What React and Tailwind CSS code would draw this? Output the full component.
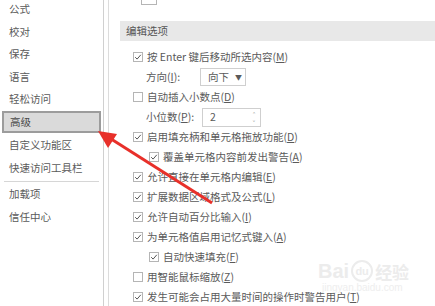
import React from "react";

const font = { fontFamily: '"Noto Sans CJK SC", "Noto Sans", sans-serif' };

function Check({ checked }) {
  return (
    <span className="w-[10px] h-[10px] border border-[#b5b5b5] bg-white flex items-center justify-center shrink-0">
      {checked && (
        <svg width="8" height="8" viewBox="0 0 8 8">
          <path d="M1.2 4.2 L3.1 6.1 L6.8 1.8" stroke="#555" strokeWidth="1" fill="none" />
        </svg>
      )}
    </span>
  );
}

function Row({ checked, indent, children }) {
  return (
    <div className={`h-[20px] flex items-center gap-[4px] ${indent ? "pl-[29px]" : "pl-[13px]"}`}>
      <Check checked={checked} />
      <span>{children}</span>
    </div>
  );
}

const side = ["公式", "校对", "保存", "语言", "轻松访问"];

export default function App() {
  return (
    <div style={font} className="relative w-[435px] h-[306px] bg-white overflow-hidden text-[10.5px] text-[#5a5a5a] leading-none">
      <div className="flex h-full">
        <div className="w-[104px] shrink-0 border-r border-[#d0d0d0] flex flex-col">
          <div className="-mt-[2px]" />
          {side.map((s) => (
            <div key={s} className="h-[22.6px] flex items-center pl-[9px]">{s}</div>
          ))}
          <div className="h-[22px] mx-[2px] flex items-center pl-[6px] bg-[#dadada] border-2 border-[#9c9c9c] text-[#4a4a4a]">高级</div>
          <div className="h-[23px] flex items-center pl-[9px] mt-[1px]">自定义功能区</div>
          <div className="h-[23px] flex items-center pl-[9px]">快速访问工具栏</div>
          <div className="h-px bg-[#d6d6d6] mx-[4px] my-[1px]" />
          <div className="h-[23px] flex items-center pl-[9px]">加载项</div>
          <div className="h-[23px] flex items-center pl-[9px]">信任中心</div>
        </div>
        <div className="w-[4px] shrink-0" />
        <div className="flex-1 border-l border-[#dcdcdc] pl-[11px]">
          <div className="h-[6px] pl-[21px] -mt-[5px]">
            <div className="w-[16px] h-[10px] border border-[#b5b5b5] bg-white" />
          </div>
          <div className="mt-[20px] h-[20px] bg-[#e8e8e8] flex items-center pl-[6px] text-[#555]">编辑选项</div>
          <div className="pt-[6px]">
            <Row checked>按 Enter 键后移动所选内容(<u>M</u>)</Row>
            <div className="h-[20px] flex items-center pl-[26px]">
              <span className="w-[54px]">方向(<u>I</u>):</span>
              <div className="w-[46px] h-[18px] border border-[#cfcfcf] flex items-center pl-[7px] gap-[6px]">
                <span>向下</span>
                <span className="text-[7px]">▼</span>
              </div>
            </div>
            <Row>自动插入小数点(<u>D</u>)</Row>
            <div className="h-[20px] flex items-center pl-[26px]">
              <span className="w-[56px]">小位数(<u>P</u>):</span>
              <div className="w-[59px] h-[19px] border border-[#cfcfcf] flex items-center pl-[7px] justify-between pr-[4px]">
                <span>2</span>
                <span className="flex flex-col text-[5px] text-[#999] leading-[6px]"><span>⌃</span><span className="rotate-180">⌃</span></span>
              </div>
            </div>
            <Row checked>启用填充柄和单元格拖放功能(<u>D</u>)</Row>
            <Row checked indent>覆盖单元格内容前发出警告(<u>A</u>)</Row>
            <Row checked>允许直接在单元格内编辑(<u>E</u>)</Row>
            <Row checked>扩展数据区域格式及公式(<u>L</u>)</Row>
            <Row checked>允许自动百分比输入(<u>I</u>)</Row>
            <Row checked>为单元格值启用记忆式键入(<u>A</u>)</Row>
            <Row checked indent>自动快速填充(<u>F</u>)</Row>
            <Row>用智能鼠标缩放(<u>Z</u>)</Row>
            <Row checked>发生可能会占用大量时间的操作时警告用户(<u>T</u>)</Row>
          </div>
        </div>
      </div>
      <div className="absolute left-[318px] top-[260px] flex items-center gap-[2px] text-[#ececec] text-[20px] font-bold" style={{ fontFamily: '"Liberation Sans", sans-serif' }}>
        <span>Bai</span>
        <span className="w-[22px] h-[22px] rounded-full border-2 border-[#ececec] text-[11px] flex items-center justify-center">du</span>
        <span className="text-[17px]" style={font}>经验</span>
      </div>
      <svg className="absolute left-0 top-0 pointer-events-none" width="435" height="306">
        <line x1="212" y1="203" x2="108" y2="137" stroke="#e8302a" strokeWidth="3" />
        <polygon points="98,131 117,134 108,148" fill="#e8302a" />
      </svg>
      <div className="absolute left-[322px] top-[283px] text-[#eeeeee] text-[10px]" style={{ fontFamily: '"Liberation Sans", sans-serif' }}>jingyan.baidu.com</div>
    </div>
  );
}
